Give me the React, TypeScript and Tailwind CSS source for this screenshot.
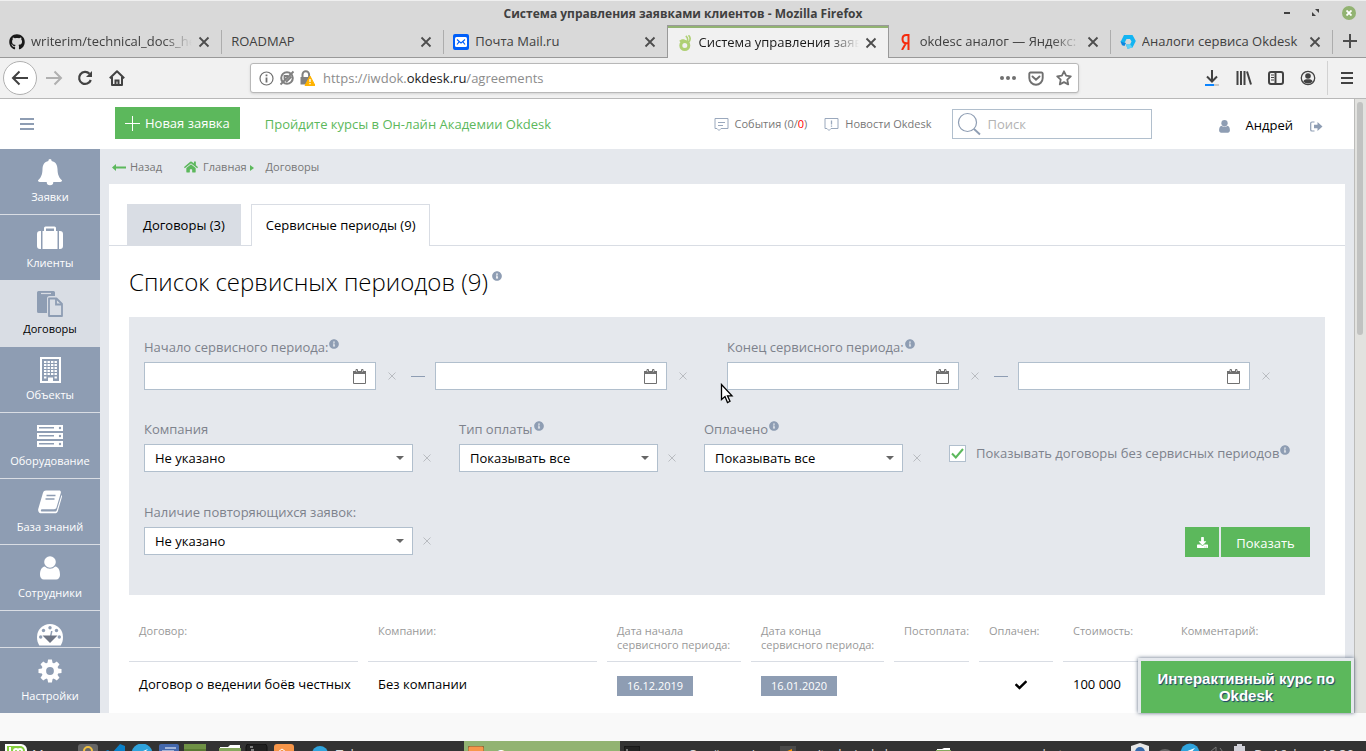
import type { ReactNode } from "react";
import { FaCheck, FaDownload, FaGithub, FaHome, FaInfoCircle } from "react-icons/fa";

/* ---------- icons ---------- */

const BellIcon = () => (
  <svg width="24" height="27" viewBox="0 0 24 27" fill="currentColor" aria-hidden="true">
    <path d="M12 0c1 0 1.700.8 1.600 1.900C17.600 2.700 19.500 6 19.500 10c0 6 2 9.200 4.500 11.300 0 1-.7 1.700-1.700 1.700h-7a3.300 3.300 0 0 1-6.600 0h-7C.7 23 0 22.300 0 21.300 2.500 19.200 4.500 16 4.500 10c0-4 1.900-7.300 5.900-8.100C10.300.8 11 0 12 0z" />
  </svg>
);

const SuitcaseIcon = () => (
  <svg width="26" height="24" viewBox="0 0 26 24" fill="currentColor" aria-hidden="true">
    <path d="M3 5h1v18H3a3 3 0 0 1-3-3V8a3 3 0 0 1 3-3zM22 5h1a3 3 0 0 1 3 3v12a3 3 0 0 1-3 3h-1z" />
    <path d="M5.500 5H7V2a1.500 1.500 0 0 1 1.500-1.500h9A1.500 1.500 0 0 1 19 2v3h1.500v18h-15zM9 5h8V2.500H9z" fillRule="evenodd" />
  </svg>
);

const ContractIcon = () => (
  <svg width="26" height="26" viewBox="0 0 26 26" aria-hidden="true">
    <path d="M1.500 0h15A1.500 1.500 0 0 1 18 1.500V5h-5.500A2.500 2.500 0 0 0 10 7.500V22H1.500A1.500 1.500 0 0 1 0 20.500v-19A1.500 1.500 0 0 1 1.500 0z" fill="currentColor" />
    <path d="M4 2.500h10" stroke="#d9dde4" strokeWidth="1.200" />
    <path d="M12 7.500h7.500l5.500 5.500v12H12z" fill="#d9dde4" stroke="currentColor" strokeWidth="1.800" strokeLinejoin="round" />
    <path d="M19 7.500v6h6" fill="none" stroke="currentColor" strokeWidth="1.800" />
  </svg>
);

const BuildingIcon = () => (
  <svg width="21" height="26" viewBox="0 0 21 26" aria-hidden="true">
    <rect x="1" y="1" width="19" height="24" fill="none" stroke="currentColor" strokeWidth="2" />
    <g fill="currentColor">
      {[4, 7, 10, 13, 16].map((y) =>
        [4, 7.500, 11, 14.500].map((x) => <rect key={x + "-" + y} x={x} y={y} width="2.400" height="2" />),
      )}
      <path d="M4 19.500h2.400v2H4zM14.500 19.500h2.400v2h-2.400zM8 20.500h5V25H8z" />
    </g>
  </svg>
);

const ServerIcon = () => (
  <svg width="26" height="22" viewBox="0 0 26 22" aria-hidden="true">
    {[0, 8, 16].map((y) => (
      <g key={y}>
        <rect y={y} width="26" height="6" fill="currentColor" />
        <rect x="2" y={y + 2} width="15" height="1.500" fill="#8e9db3" />
        <circle cx="23" cy={y + 3} r="1.200" fill="#8e9db3" />
      </g>
    ))}
  </svg>
);

const BookIcon = () => (
  <svg width="24" height="24" viewBox="0 0 24 24" aria-hidden="true">
    <path d="M8 .5h13c1.500 0 2.200 1 1.800 2.400L18.500 17.500c-.3 1-1.200 1.700-2.300 1.700H4c-1.300 0-1.700 2.300 0 2.300h13c.9 0 1.500-.4 1.800-1.300L23.500 5c.6.600.6 1.400.4 2.100l-4 13.800c-.4 1.400-1.500 2.400-3 2.400H3.500C1 23.300-.4 21 .3 18.700L5 2.800C5.500 1.300 6.500.5 8 .5z" fill="currentColor" />
    <path d="M8.500 5.500h9M7.500 9h9" stroke="#8e9db3" strokeWidth="1.500" />
  </svg>
);

const PersonIcon = ({ className }: { className: string }) => (
  <svg className={className} viewBox="0 0 20 24" fill="currentColor" aria-hidden="true">
    <circle cx="10" cy="6" r="5.800" />
    <path d="M4.800 10.500a7.300 7.300 0 0 0 10.400 0c3.500.5 4.800 4 4.800 8.500 0 2.700-1.700 4.500-3.800 4.500H3.800C1.700 23.500 0 21.700 0 19c0-4.500 1.300-8 4.800-8.500z" />
  </svg>
);

const GaugeIcon = () => (
  <svg width="26" height="22" viewBox="0 0 26 22" aria-hidden="true">
    <path d="M13 0a13 13 0 0 1 13 13c0 3.500-.8 6-2.300 8.500H2.300C.8 19 0 16.500 0 13A13 13 0 0 1 13 0z" fill="currentColor" />
    <g fill="#8e9db3">
      <circle cx="13" cy="3.700" r="1.700" />
      <circle cx="6.500" cy="6.500" r="1.700" />
      <circle cx="19.500" cy="6.500" r="1.700" />
      <circle cx="3.700" cy="13" r="1.700" />
      <circle cx="22.300" cy="13" r="1.700" />
      <path d="M14 7h1.500l-1 5h-1.500z" />
    </g>
    <path d="M5.500 11.500h15l-7.500 7.500z" fill="#6f7685" />
  </svg>
);

const GearIcon = () => (
  <svg width="24" height="24" viewBox="-12 -12 24 24" aria-hidden="true">
    {[0, 45, 90, 135].map((a) => (
      <path key={a} d="M-2.600-8-1.900-11.500h3.800l.7 3.500v16l-.7 3.500h-3.800l-.7-3.500z" transform={`rotate(${a})`} fill="currentColor" />
    ))}
    <circle r="8.500" fill="currentColor" />
    <circle r="3.900" fill="#8e9db3" />
  </svg>
);

const CloseGlyph = () => (
  <svg width="12" height="12" viewBox="0 0 12 12" fill="none" stroke="#4d4d4d" strokeWidth="1.800" aria-hidden="true">
    <path d="M1.500 1.500l9 9M10.500 1.500l-9 9" />
  </svg>
);

const MailFavicon = () => (
  <svg className="shrink-0" width="16" height="16" viewBox="0 0 16 16" aria-hidden="true">
    <rect width="16" height="16" rx="2" fill="#005ff9" />
    <rect x="2" y="3" width="12" height="10" rx="1.500" fill="#fff" />
    <path d="M4 5.500l2.300 2L4 10.500M12 5.500l-2.300 2 2.300 3M5.500 7l2.500 2 2.500-2" fill="none" stroke="#005ff9" strokeWidth="1.200" />
  </svg>
);

const OkdeskFavicon = () => (
  <svg className="shrink-0" width="16" height="16" viewBox="0 0 16 16" aria-hidden="true">
    <circle cx="7.800" cy="10.500" r="4" fill="none" stroke="#afd074" strokeWidth="3" />
    <path d="M2.200 5.800C4.500 3.500 8 3.800 9.500 6l2.300 3-3.300-1.500C6 8.200 3.500 7.700 2.200 5.800z" fill="#afd074" />
    <path d="M8.800 1c1.800 1.300 2.300 3.500 1.500 6M11.500.3c2 2 2 5-.2 7.500" fill="none" stroke="#afd074" strokeWidth="1.600" />
  </svg>
);

const YandexFavicon = () => (
  <svg className="shrink-0" width="16" height="16" viewBox="0 0 16 16" fill="none" stroke="#f52a0c" strokeWidth="2" aria-hidden="true">
    <path d="M10.500 16V1H8.500C6 1 4.500 2.500 4.500 5S6 9.300 8.500 9.300h2M7.800 9.500L4 16" />
  </svg>
);

const AnalogFavicon = () => (
  <svg className="shrink-0" width="16" height="16" viewBox="0 0 16 16" aria-hidden="true">
    <path d="M4 1h8.500l3.300 6-3.300 6.500-5 1.200L6 10.500h4L11.500 7.500 10 5H6.500L4.500 9 .5 8z" fill="#13b4f2" />
    <path d="M.5 7.500L6 9l-1.500 3-2.500-.8z" fill="#0b86df" />
    <path d="M6 10.500h4.500l2 3-5 1.200z" fill="#5ed0f5" />
  </svg>
);

const BackArrow = () => (
  <svg width="18" height="16" viewBox="0 0 18 16" fill="none" stroke="#424242" strokeWidth="2" aria-hidden="true">
    <path d="M17 8H2M8.500 1.500L2 8l6.500 6.500" />
  </svg>
);
const ForwardArrow = () => (
  <svg width="18" height="16" viewBox="0 0 18 16" fill="none" stroke="#b0b0b0" strokeWidth="2" aria-hidden="true">
    <path d="M1 8h15M9.500 1.500L16 8l-6.500 6.500" />
  </svg>
);
const ReloadGlyph = () => (
  <svg width="16" height="16" viewBox="0 0 16 16" fill="none" stroke="#424242" strokeWidth="2.200" aria-hidden="true">
    <path d="M12.500 3.800A6 6 0 1 0 13.800 10" />
    <path d="M15 1v6H9z" fill="#424242" stroke="none" />
  </svg>
);
const HomeGlyph = () => (
  <svg width="16" height="16" viewBox="0 0 16 16" fill="none" stroke="#424242" strokeWidth="2" aria-hidden="true">
    <path d="M.8 8.200L8 1.200l7.200 7M3 7v8h10V7" strokeLinejoin="round" />
    <path d="M6.500 15v-4.500h3V15" />
  </svg>
);

const CommentGlyph = ({ alert }: { alert?: boolean }) => (
  <svg width="15" height="15" viewBox="0 0 15 15" fill="none" stroke="#9aa8bd" aria-hidden="true">
    <path d="M1 1.500h13v10H7l-2 2-2-2H1z" />
    {alert ? <path d="M7.500 3.500v4M7.500 8.500v1.200" strokeWidth="1.300" /> : <path d="M4 5.500h7M4 8.500h5" />}
  </svg>
);

const CalendarGlyph = () => (
  <svg width="13" height="15" viewBox="0 0 13 15" fill="none" stroke="#707070" aria-hidden="true">
    <path d="M.5 3.500h12v11H.5z" />
    <path d="M0 3.500h13" strokeWidth="3" />
    <path d="M3 .5h1.500v3H3zM8.500.5H10v3H8.500z" fill="#fff" />
  </svg>
);

const ClearGlyph = () => (
  <svg width="8" height="8" viewBox="0 0 8 8" fill="none" stroke="#b9bcc1" aria-hidden="true">
    <path d="M.5.500l7 7M7.500.500l-7 7" />
  </svg>
);

/* ---------- browser frame ---------- */

type Tab = { title: string; icon?: ReactNode; active?: boolean; fade?: boolean; divider?: boolean };

const tabs: Tab[] = [
  { title: "writerim/technical_docs_help", icon: <FaGithub className="size-4 shrink-0 text-[#191919]" />, fade: true, divider: true },
  { title: "ROADMAP", divider: true },
  { title: "Почта Mail.ru", icon: <MailFavicon /> },
  { title: "Система управления заявками", icon: <OkdeskFavicon />, active: true, fade: true },
  { title: "okdesc аналог — Яндекс: нашлось", icon: <YandexFavicon />, fade: true, divider: true },
  { title: "Аналоги сервиса Okdesk", icon: <AnalogFavicon />, divider: true },
];

function TitleBar() {
  return (
    <div className="relative flex h-[25px] shrink-0 items-center justify-center border-t border-[#efefef] pt-[2px] text-[12px] font-bold text-[#404040]">
      Система управления заявками клиентов - Mozilla Firefox
      <div className="absolute inset-y-0 right-[10px] flex items-center gap-[22px]">
        <button aria-label="Свернуть" className="h-[2px] w-[6px] bg-[#404040]" />
        <button aria-label="Восстановить">
          <svg width="8" height="8" viewBox="0 0 8 8" fill="#404040"><path d="M3 0h4v4zM0 3l4 4H0z" /></svg>
        </button>
        <button aria-label="Закрыть" className="flex size-[14px] items-center justify-center rounded-full bg-[#92b372]">
          <svg width="6" height="6" viewBox="0 0 6 6" stroke="#fff" strokeWidth="1.800"><path d="M.5.500l5 5M5.500.500l-5 5" /></svg>
        </button>
      </div>
    </div>
  );
}

function TabStrip() {
  return (
    <div className="flex h-[33px] shrink-0 text-[13px] text-[#404040]">
      <div className="grid min-w-0 flex-1 grid-cols-6">
        {tabs.map((t) => (
          <div
            key={t.title}
            className={
              t.active
                ? "flex min-w-0 items-center border-x border-t border-[#999] bg-[#f1f1f1] pt-px text-[#1a1a1a] shadow-[inset_0_2px_0_#92b372]"
                : "flex min-w-0 items-center border-b border-[#999] pt-[2px]"
            }
          >
            <div className={t.divider ? "flex h-6 min-w-0 flex-1 items-center gap-[6px] border-r border-[#adadad] pr-[11px] pl-[9px]" : "flex h-6 min-w-0 flex-1 items-center gap-[6px] pr-[11px] pl-[9px]"}>
              {t.icon}
              <span className={t.fade ? "min-w-0 flex-1 overflow-hidden whitespace-nowrap [mask-image:linear-gradient(to_right,#000_82%,transparent)]" : "min-w-0 flex-1 overflow-hidden whitespace-nowrap"}>{t.title}</span>
              <button aria-label="Закрыть вкладку" className="shrink-0"><CloseGlyph /></button>
            </div>
          </div>
        ))}
      </div>
      <button aria-label="Новая вкладка" className="flex w-[33px] items-center justify-center border-b border-[#999]">
        <svg width="14" height="14" viewBox="0 0 14 14" stroke="#4d4d4d" strokeWidth="2"><path d="M7 0v14M0 7h14" /></svg>
      </button>
    </div>
  );
}

function Toolbar() {
  return (
    <div className="flex h-[41px] shrink-0 items-center border-b border-[#b8b8b8] bg-[#f1f1f1] pr-[9px] pl-[3px]">
      <div className="flex w-[247px] shrink-0 items-center">
        <button aria-label="Назад" className="mr-2 flex size-[34px] items-center justify-center rounded-full border border-[#b0b0b0] bg-white"><BackArrow /></button>
        <button aria-label="Вперёд" className="mr-[14px]"><ForwardArrow /></button>
        <button aria-label="Обновить" className="mr-4"><ReloadGlyph /></button>
        <button aria-label="Домой"><HomeGlyph /></button>
      </div>
      <div className="flex h-[30px] max-w-[829px] flex-1 items-center gap-[5px] rounded-[3px] border border-[#b8b8b8] bg-white pr-[6px] pl-2 shadow-sm">
        <svg width="15" height="15" viewBox="0 0 15 15" fill="none" stroke="#707070" aria-hidden="true">
          <circle cx="7.500" cy="7.500" r="6.500" strokeWidth="1.200" /><path d="M7.500 6.500v5M7.500 3.500v1.700" strokeWidth="1.800" />
        </svg>
        <svg width="16" height="16" viewBox="0 0 16 16" fill="none" stroke="#808080" strokeWidth="2" aria-hidden="true">
          <circle cx="8" cy="8" r="5.800" /><path d="M1.500 14.500l13-13M5.500 9.500V6h3.500M7 12l5.500-5.500" strokeWidth="1.800" />
        </svg>
        <svg width="15" height="16" viewBox="0 0 15 16" aria-hidden="true">
          <path d="M2.500 7V4.500a3.300 3.300 0 0 1 6.600 0V7" fill="none" stroke="#808080" strokeWidth="2" />
          <path d="M.5 7h10.500v7.500H.5z" fill="#808080" />
          <path d="M10 6l5 9.500H5z" fill="#ffb300" stroke="#ffb300" strokeLinejoin="round" /><path d="M10 9v3M10 13v1.300" stroke="#fff" strokeWidth="1.300" />
        </svg>
        <div className="ml-[3px] flex-1 pt-[2px] text-[13px] text-[#8c8c8c]">
          https://iwdok.<span className="text-[#1a1a1a]">okdesk.ru</span>/agreements
        </div>
        <div className="flex items-center gap-3">
          <svg width="16" height="4" viewBox="0 0 16 4" fill="#707070"><circle cx="2" cy="2" r="2" /><circle cx="8" cy="2" r="2" /><circle cx="14" cy="2" r="2" /></svg>
          <svg width="16" height="15" viewBox="0 0 16 15" fill="none" stroke="#707070" strokeWidth="1.900"><path d="M2.500 1.500h11a1.200 1.200 0 0 1 1.200 1.200V7A6.700 6.700 0 0 1 1.300 7V2.700a1.200 1.200 0 0 1 1.200-1.200z" /><path d="M4.500 5.500L8 8.800l3.500-3.300" strokeLinecap="round" /></svg>
          <svg width="16" height="16" viewBox="0 0 16 16" fill="none" stroke="#707070" strokeWidth="1.800" strokeLinejoin="round"><path d="M8 1.300l2.100 4.400 4.700.6-3.500 3.300.9 4.800L8 12.100l-4.200 2.300.9-4.800L1.200 6.300l4.700-.6z" /></svg>
        </div>
      </div>
      <div className="ml-auto flex items-center gap-4">
        <svg width="16" height="16" viewBox="0 0 16 16" fill="none" stroke="#424242" strokeWidth="2"><path d="M8 0v11M3 6.500l5 5 5-5" /><path d="M1 15h14" stroke="#c8c8c8" /><path d="M1 15h9" stroke="#0a84ff" /></svg>
        <svg width="16" height="14" viewBox="0 0 16 14" stroke="#424242" strokeWidth="2"><path d="M1.500 0v14M5 0v14M8.500 0v14M11 .5l4 13" /></svg>
        <svg width="16" height="14" viewBox="0 0 16 14" fill="none" stroke="#424242" strokeWidth="2"><rect x="1" y="1" width="14" height="12" rx="2" /><path d="M7.500 1v12" /><path d="M3 4h3M3 6.500h3M3 9h3" strokeWidth="1" /></svg>
        <svg width="16" height="16" viewBox="0 0 16 16" aria-hidden="true"><circle cx="8" cy="8" r="6.700" fill="none" stroke="#424242" strokeWidth="1.300" /><circle cx="8" cy="6" r="2.800" fill="#424242" /><path d="M3.300 11.500C4 9.500 6 9.300 8 9.300s4 .2 4.700 2.200A6 6 0 0 1 8 13.500a6 6 0 0 1-4.700-2z" fill="#424242" /></svg>
        <div className="-ml-[5px] flex h-[34px] items-center border-l border-[#d2d2d2] pl-[9px]">
          <button aria-label="Меню"><svg className="mx-1 block" width="12" height="12" viewBox="0 0 12 12" stroke="#424242" strokeWidth="2"><path d="M0 1h12M0 6h12M0 11h12" /></svg></button>
        </div>
      </div>
    </div>
  );
}

/* ---------- application ---------- */

const navItems: { label: string; icon: ReactNode; active?: boolean }[] = [
  { label: "Заявки", icon: <BellIcon /> },
  { label: "Клиенты", icon: <SuitcaseIcon /> },
  { label: "Договоры", icon: <ContractIcon />, active: true },
  { label: "Объекты", icon: <BuildingIcon /> },
  { label: "Оборудование", icon: <ServerIcon /> },
  { label: "База знаний", icon: <BookIcon /> },
  { label: "Сотрудники", icon: <PersonIcon className="h-6 w-5" /> },
];

function NavItem({ label, icon, active }: { label: string; icon: ReactNode; active?: boolean }) {
  return (
    <a
      href="#"
      className={
        active
          ? "flex h-[66px] shrink-0 flex-col items-center border-b border-[#d9dde4] bg-[#d9dde4] pt-[9px] text-[#8e9db3]"
          : "flex h-[66px] shrink-0 flex-col items-center border-b border-[#d9dde4] pt-[9px] text-white"
      }
    >
      <span className="flex h-7 items-center">{icon}</span>
      <span className={active ? "mt-[3px] text-[11px] leading-4 text-black" : "mt-[3px] text-[11px] leading-4 text-white"}>{label}</span>
    </a>
  );
}

function Sidebar() {
  return (
    <nav className="flex w-[100px] shrink-0 flex-col bg-[#8e9db3]">
      <div className="flex min-h-0 flex-1 flex-col overflow-hidden">
        {navItems.map((n) => <NavItem key={n.label} {...n} />)}
        <a href="#" aria-label="Отчёты" className="flex shrink-0 justify-center pt-[13px] text-white"><GaugeIcon /></a>
      </div>
      <div className="border-t border-[#d9dde4]">
        <a href="#" className="flex h-[65px] flex-col items-center pt-[9px] text-white">
          <span className="flex h-7 items-center"><GearIcon /></span>
          <span className="mt-[3px] text-[11px] leading-4">Настройки</span>
        </a>
      </div>
    </nav>
  );
}

function Header() {
  return (
    <header className="flex h-[50px] shrink-0 items-center bg-white pr-[31px]">
      <button aria-label="Свернуть меню" className="ml-5">
        <svg className="block" width="14" height="12" viewBox="0 0 14 12" stroke="#8e9db3" strokeWidth="2"><path d="M0 1h14M0 6h14M0 11h14" /></svg>
      </button>
      <button className="mb-[2px] ml-[81px] flex h-8 items-center gap-[5px] bg-[#5cb85c] px-[10px] pt-px text-[13px] whitespace-nowrap text-white">
        <svg width="15" height="15" viewBox="0 0 15 15" stroke="#fff"><path d="M7.500 0v15M0 7.500h15" /></svg>
        Новая заявка
      </button>
      <a href="#" className="mt-[2px] ml-[25px] text-[13px] whitespace-nowrap text-[#5cb85c]">Пройдите курсы в Он-лайн Академии Okdesk</a>
      <div className="ml-auto flex items-center text-[11px] whitespace-nowrap text-[#777]">
        <a href="#" className="flex items-center gap-[6px]"><CommentGlyph /><span>События (0/<span className="text-[#f00]">0</span>)</span></a>
        <a href="#" className="ml-[17px] flex items-center gap-[6px]"><CommentGlyph alert />Новости Okdesk</a>
      </div>
      <label className="ml-5 flex h-[30px] w-[200px] items-center border border-[#b1bfcd] pl-1">
        <span className="sr-only">Поиск</span>
        <svg className="shrink-0" width="24" height="24" viewBox="0 0 24 24" fill="none" stroke="#8e9db3" aria-hidden="true"><circle cx="10.500" cy="10.500" r="9" strokeWidth="1.200" /><path d="M17 17l6 5.500" strokeWidth="1.800" /></svg>
        <input type="text" placeholder="Поиск" className="ml-[7px] w-full min-w-0 bg-transparent pt-[2px] text-[13px] outline-none placeholder:text-[#b3b3b3]" />
      </label>
      <a href="#" className="mt-1 ml-[67px] flex items-center gap-4 text-[13px] text-black"><PersonIcon className="h-[13px] w-[11px] text-[#8e9db3]" />Андрей</a>
      <button aria-label="Выйти" className="mt-1 ml-[17px]">
        <svg className="block" width="13" height="11" viewBox="0 0 13 11" aria-hidden="true"><path d="M4.500 1H2a1.300 1.300 0 0 0-1.300 1.300v6.400A1.300 1.300 0 0 0 2 10h2.500" fill="none" stroke="#8e9db3" strokeWidth="1.200" /><path d="M4 3.700h3.500V1L12.500 5.500l-5 4.500V7.300H4z" fill="#8e9db3" /></svg>
      </button>
    </header>
  );
}

const Info = () => <FaInfoCircle className="mb-[3px] ml-[1px] inline size-[10px] align-baseline text-[#8e9db3]" />;

function DateBox({ label }: { label: string }) {
  return (
    <div className="flex h-7 min-w-0 flex-1 items-center border border-[#b1bfcd] bg-white pr-[9px]">
      <input type="text" aria-label={label} className="h-full w-full min-w-0 bg-transparent px-2 text-[13px] outline-none" />
      <button type="button" aria-label="Открыть календарь"><CalendarGlyph /></button>
    </div>
  );
}

const Clear = ({ className }: { className: string }) => (
  <button type="button" aria-label="Очистить" className={className}><ClearGlyph /></button>
);

function DateRange({ label }: { label: string }) {
  return (
    <fieldset className="min-w-0">
      <legend className="h-[30px] pt-[5px] leading-5">{label}<Info /></legend>
      <div className="flex items-center">
        <DateBox label="С даты" />
        <Clear className="ml-3" />
        <span className="mr-[10px] ml-[15px] h-px w-[14px] bg-[#8e9db3]" />
        <DateBox label="По дату" />
        <Clear className="mr-[40px] ml-3" />
      </div>
    </fieldset>
  );
}

function SelectField({ id, label, value, info }: { id: string; label: string; value: string; info?: boolean }) {
  return (
    <div className="min-w-0">
      <label htmlFor={id} className="block h-[30px] pt-[5px] leading-5">{label}{info && <Info />}</label>
      <div className="flex items-center">
        <div className="relative min-w-0 flex-1">
          <select id={id} className="block h-7 w-full appearance-none border border-[#b1bfcd] bg-white px-[10px] pt-[2px] text-[13px] text-black outline-none">
            <option>{value}</option>
          </select>
          <svg className="pointer-events-none absolute top-3 right-[9px]" width="8" height="4" viewBox="0 0 8 4" fill="#666"><path d="M0 0h8L4 4z" /></svg>
        </div>
        <Clear className="mr-[28px] ml-[10px]" />
      </div>
    </div>
  );
}

function Filters() {
  return (
    <form className="mt-[19px] bg-[#e5e8ed] px-[15px] pt-[15px] pb-[38px] text-[13px] text-[#7d828c]">
      <div className="grid grid-cols-2">
        <DateRange label="Начало сервисного периода:" />
        <DateRange label="Конец сервисного периода:" />
      </div>
      <div className="mt-6 grid grid-cols-[315fr_245fr_245fr_361fr]">
        <SelectField id="company" label="Компания" value="Не указано" />
        <SelectField id="payment" label="Тип оплаты" value="Показывать все" info />
        <SelectField id="paid" label="Оплачено" value="Показывать все" info />
        <label className="mt-[29px] flex h-5 items-center whitespace-nowrap">
          <span className="relative mr-[10px] flex size-[17px]">
            <input type="checkbox" defaultChecked className="peer size-[17px] appearance-none border border-[#b1bfcd] bg-white" />
            <svg className="pointer-events-none absolute top-[3px] left-[2px] hidden peer-checked:block" width="13" height="11" viewBox="0 0 13 11" fill="none" stroke="#5cb85c" strokeWidth="2"><path d="M1 5.500l3.800 4L12 1" /></svg>
          </span>
          <span className="pt-[2px]">Показывать договоры без сервисных периодов<Info /></span>
        </label>
      </div>
      <div className="mt-[25px] grid grid-cols-[315fr_851fr]">
        <SelectField id="recurring" label="Наличие повторяющихся заявок:" value="Не указано" />
        <div className="mt-[30px] flex h-[30px] justify-end gap-[2px] text-white">
          <button type="button" aria-label="Скачать" className="flex w-[34px] items-center justify-center bg-[#5cb85c]"><FaDownload className="size-[11px]" /></button>
          <button type="button" className="w-[89px] bg-[#5cb85c] pt-[3px]">Показать</button>
        </div>
      </div>
    </form>
  );
}

const columns = [
  { title: ["Договор:"], width: "w-[229px]" },
  { title: ["Компании:"], width: "w-[229px]" },
  { title: ["Дата начала", "сервисного периода:"], width: "w-[134px]" },
  { title: ["Дата конца", "сервисного периода:"], width: "w-[133px]" },
  { title: ["Постоплата:"], width: "w-[75px]" },
  { title: ["Оплачен:"], width: "w-[74px]" },
  { title: ["Стоимость:"], width: "w-[98px]" },
  { title: ["Комментарий:"], width: "w-[154px]" },
];

const DateBadge = ({ children }: { children: string }) => (
  <span className="mt-px inline-block h-5 bg-[#8e9db3] px-[10px] text-[11px] leading-[20px] text-white">{children}</span>
);

function PeriodsTable() {
  return (
    <div className="-mx-[10px] mt-7">
      <table className="w-full table-fixed border-separate border-spacing-x-[10px] border-spacing-y-0 text-left">
        <thead>
          <tr className="text-[11px] leading-[14px] text-[#999]">
            {columns.map((c, i) => (
              <th key={i} className={`${c.width} h-[39px] border-b border-[#d9dde4] pt-[1px] pl-[10px] align-top font-normal whitespace-nowrap`}>
                {c.title.map((line) => <span key={line} className="block">{line}</span>)}
              </th>
            ))}
          </tr>
        </thead>
        <tbody>
          <tr className="h-[46px] text-[13px] text-black">
            <td className="pl-[10px] whitespace-nowrap">Договор о ведении боёв честных</td>
            <td className="pl-[10px]">Без компании</td>
            <td className="pl-[10px]"><DateBadge>16.12.2019</DateBadge></td>
            <td className="pl-[10px]"><DateBadge>16.01.2020</DateBadge></td>
            <td />
            <td><FaCheck className="ml-9 size-3" aria-label="Да" /></td>
            <td className="pl-[10px]">100 000</td>
            <td />
          </tr>
        </tbody>
      </table>
    </div>
  );
}

function Content() {
  return (
    <main className="flex min-w-0 flex-1 flex-col overflow-hidden bg-[#e5e8ed] px-[9px]">
      <div className="flex h-[35px] shrink-0 items-center pt-[2px] pl-[3px] text-[11px] text-[#777]">
        <a href="#" className="flex items-center gap-1">
          <svg width="14" height="7" viewBox="0 0 14 7" fill="#5cb85c"><path d="M4 0v2.500h10v2H4V7L0 3.500z" /></svg>
          Назад
        </a>
        <a href="#" className="ml-[22px] flex items-center gap-[5px]"><FaHome className="mb-[2px] size-[14px] text-[#5cb85c]" />Главная</a>
        <svg className="ml-[3px]" width="4" height="6" viewBox="0 0 4 6" fill="#5cb85c"><path d="M0 0l4 3-4 3z" /></svg>
        <span className="ml-3">Договоры</span>
      </div>
      <div className="min-h-0 flex-1 bg-white pt-5">
        <div className="flex gap-[10px] border-b border-[#d9dde4] pl-[18px] text-[13px] text-black">
          <a href="#" className="flex h-[41px] items-center bg-[#d9dde4] px-4 pt-[2px]">Договоры (3)</a>
          <a href="#" className="-mb-px flex h-[42px] items-center border border-b-0 border-[#d9dde4] bg-white px-[14px]">Сервисные периоды (9)</a>
        </div>
        <div className="px-5">
          <h1 className="pt-5 text-[24px] leading-8 font-light text-black">
            Список сервисных периодов (9)<FaInfoCircle className="mb-[10px] ml-1 inline size-[10px] align-baseline text-[#8e9db3]" />
          </h1>
          <Filters />
          <PeriodsTable />
        </div>
      </div>
    </main>
  );
}

/* ---------- desktop panel ---------- */

function Taskbar() {
  return (
    <footer className="h-[10px] shrink-0 overflow-hidden bg-[#333] text-[13px] leading-5 text-[#d8d8d8]">
      <div className="flex h-10 items-start">
        <svg className="mt-[3px] ml-[5px] shrink-0" width="22" height="22" viewBox="0 0 22 22"><path d="M0 0h16a6 6 0 0 1 6 6v16H6a6 6 0 0 1-6-6z" fill="#fff" /><path d="M2 2h13a5 5 0 0 1 5 5v13H7a5 5 0 0 1-5-5z" fill="#87cf3e" /><path d="M5 3v10M9 14V7a2 2 0 0 1 4 0v6M13 7a2 2 0 0 1 4 0v6" fill="none" stroke="#fff" strokeWidth="2" /></svg>
        <span className="mt-[3px] ml-[5px] w-[46px]">Меню</span>
        <svg className="mt-[3px] shrink-0" width="216" height="20" viewBox="0 0 216 20">
          <rect width="20" height="20" rx="3" fill="#666" /><path d="M6 10V7a4 4 0 0 1 8 0v3" fill="none" stroke="#f0c040" strokeWidth="2" />
          <path d="M42 0l5 2v18H26l-1-12 5-2 4 3z" fill="#0a80c8" />
          <circle cx="64" cy="10" r="10.500" fill="#2fa3dc" /><path d="M70 5l-12 5 5 2z" fill="#fff" />
          <rect x="81" width="20" height="20" rx="2" fill="#4468ad" /><path d="M87 4h11M84 7h12" stroke="#fff" />
          <rect x="106" width="22" height="20" fill="#6f9145" /><path d="M106 6h22" stroke="#476222" />
          <path d="M142 3h8l2-2h10v5h-20z" fill="#fff" /><path d="M141 4h22v16h-22z" fill="#86a85e" />
          <rect x="168" width="21" height="20" rx="3" fill="#202020" stroke="#111" /><path d="M172 3h3M173 6h3" stroke="#ddd" />
          <rect x="196" width="20" height="20" rx="3" fill="#f7964a" /><path d="M200 8l4-3 4 3" stroke="#fff" fill="none" />
        </svg>
        <svg className="mt-[5px] ml-[18px] shrink-0" width="16" height="16"><circle cx="8" cy="8" r="8" fill="#2fa3dc" /></svg>
        <span className="mt-[3px] ml-2 flex-1">Telegram</span>
        <div className="flex h-10 w-[156px] gap-3 bg-[#92b372] pl-1 text-white">
          <svg className="mt-[5px] shrink-0" width="16" height="16"><rect width="16" height="16" rx="2" fill="#f7964a" stroke="#7b5b30" /></svg>
          <span className="mt-[3px]">Система упр…</span>
        </div>
        <div className="flex w-[156px] gap-3 pl-1">
          <svg className="mt-[5px] shrink-0" width="16" height="16"><rect width="16" height="16" rx="2" fill="#222" stroke="#111" /><path d="M3 3v4" stroke="#ccc" /></svg>
          <span className="mt-[3px] ml-9">Семён — Ф…</span>
        </div>
        <div className="flex w-[156px] gap-3 pl-1">
          <svg className="mt-[5px] shrink-0" width="16" height="16"><rect width="16" height="16" fill="#4a4a4a" /><path d="M12 3v5L5 6z" fill="#ff9800" /></svg>
          <span className="mt-[3px]">~/technical_docs</span>
        </div>
        <div className="flex w-[194px] gap-3 pl-1">
          <svg className="mt-[5px] shrink-0" width="16" height="16"><path d="M1 3h5l2-1h6v4H1z" fill="#fff" /><path d="M0 4h15v12H0z" fill="#86a85e" /></svg>
          <span className="mt-[3px] ml-8">screenshots</span>
        </div>
        <svg className="mt-[2px] ml-1 shrink-0" width="124" height="20" viewBox="0 0 124 20">
          <path d="M1 3l9-3 9 3v9l-9 8-9-8z" fill="#e8e8e8" /><circle cx="10" cy="9" r="5" fill="#3568a8" />
          <circle cx="35" cy="15" r="9" fill="#666" /><circle cx="60" cy="10" r="9.500" fill="#2fa3dc" /><path d="M65 5l-10 4 5 2z" fill="#fff" />
          <path d="M80 9l6-5v14zM90 5a9 9 0 0 1 3 8" stroke="#777" fill="none" /><path d="M104 3h3V1h5v2h3v17h-11z" fill="#d0d0d8" />
        </svg>
        <span className="mt-[3px] w-[112px] whitespace-nowrap">Вс 16 фев, 18:30</span>
      </div>
    </footer>
  );
}

export default function App() {
  return (
    <div className="relative flex h-screen flex-col overflow-hidden bg-[#d9d9d9] font-['Open_Sans','Noto_Sans',sans-serif]">
      <TitleBar />
      <TabStrip />
      <Toolbar />
      <div className="relative flex min-h-0 flex-1 bg-white">
        <div className="flex min-w-0 flex-1 flex-col">
          <Header />
          <div className="flex min-h-0 flex-1">
            <Sidebar />
            <Content />
          </div>
        </div>
        <div className="w-3 shrink-0 border-l border-[#bcbcba] bg-[#e2e2df] px-[2px] pt-[3px]">
          <div className="h-[233px] w-[6px] rounded-full bg-[#c1c2c1]" />
        </div>
        <a href="#" className="absolute right-[12px] bottom-0 flex h-[55px] w-[216px] items-center justify-center border-3 border-b-0 border-[#e5e8ed] bg-[#5cb85c] px-3 text-center font-['Liberation_Sans',sans-serif] text-[15px] leading-[17px] font-bold text-white shadow-[0_0_4px_#5b6b80] [text-shadow:1px_1px_1px_#1c3f6e]">
          Интерактивный курс по Okdesk
        </a>
        <svg className="pointer-events-none absolute top-[284px] left-[720px]" width="14" height="22" viewBox="0 0 14 22" aria-hidden="true">
          <path d="M1.500 1.500v15l3.500-3 2.500 6 2.500-1.200-2.500-5.500h4.500z" fill="#fff" stroke="#000" strokeWidth="1.300" />
        </svg>
      </div>
      <div className="h-7 shrink-0 bg-[#f9f9f9]" />
      <Taskbar />
    </div>
  );
}
